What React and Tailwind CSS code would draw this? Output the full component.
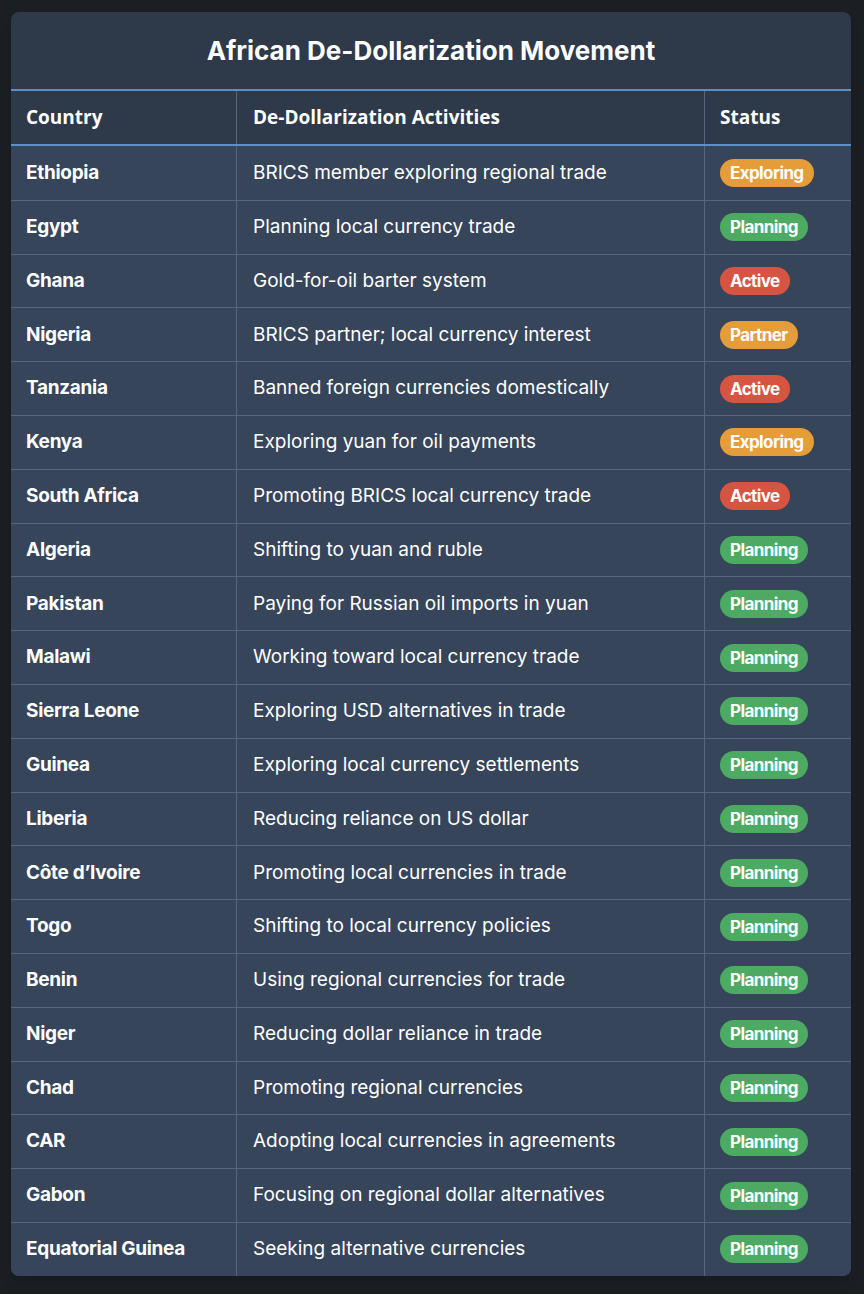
const rows = [
  ['Ethiopia', 'BRICS member exploring regional trade', 'Exploring'],
  ['Egypt', 'Planning local currency trade', 'Planning'],
  ['Ghana', 'Gold-for-oil barter system', 'Active'],
  ['Nigeria', 'BRICS partner; local currency interest', 'Partner'],
  ['Tanzania', 'Banned foreign currencies domestically', 'Active'],
  ['Kenya', 'Exploring yuan for oil payments', 'Exploring'],
  ['South Africa', 'Promoting BRICS local currency trade', 'Active'],
  ['Algeria', 'Shifting to yuan and ruble', 'Planning'],
  ['Pakistan', 'Paying for Russian oil imports in yuan', 'Planning'],
  ['Malawi', 'Working toward local currency trade', 'Planning'],
  ['Sierra Leone', 'Exploring USD alternatives in trade', 'Planning'],
  ['Guinea', 'Exploring local currency settlements', 'Planning'],
  ['Liberia', 'Reducing reliance on US dollar', 'Planning'],
  ['Côte d’Ivoire', 'Promoting local currencies in trade', 'Planning'],
  ['Togo', 'Shifting to local currency policies', 'Planning'],
  ['Benin', 'Using regional currencies for trade', 'Planning'],
  ['Niger', 'Reducing dollar reliance in trade', 'Planning'],
  ['Chad', 'Promoting regional currencies', 'Planning'],
  ['CAR', 'Adopting local currencies in agreements', 'Planning'],
  ['Gabon', 'Focusing on regional dollar alternatives', 'Planning'],
  ['Equatorial Guinea', 'Seeking alternative currencies', 'Planning'],
]

const badgeColors = {
  Exploring: 'bg-[#e59d3a]',
  Partner: 'bg-[#e59d3a]',
  Planning: 'bg-[#4caa62]',
  Active: 'bg-[#d65442]',
}

const StatusBadge = ({ status }) => (
  <span
    className={`inline-block rounded-full px-[10px] h-[28px] leading-[28px] text-[17px] font-bold tracking-[-0.6px] text-white ${badgeColors[status]}`}
  >
    {status}
  </span>
)

export default function App() {
  return (
    <div className="min-h-[1294px] bg-[#1b1e23] pt-[12px] pl-[11px] font-['Inter',sans-serif]">
      <div className="w-[840px] overflow-hidden rounded-lg bg-[#2e3949] shadow-lg">
        <h1 className="h-[77px] flex items-center justify-center text-[26px] font-bold text-white">
          African De-Dollarization Movement
        </h1>

        <div className="grid grid-cols-[226px_468px_1fr] h-[57px] border-y-2 border-[#5b8fc9] bg-[#2e3949] font-['Open_Sans',sans-serif] text-[19px] font-bold text-white">
          <div className="flex items-center px-[15px] border-r border-[#56667c]">Country</div>
          <div className="flex items-center px-[16px] border-r border-[#56667c]">De-Dollarization Activities</div>
          <div className="flex items-center px-[15px]">Status</div>
        </div>

        <div className="bg-[#364559]">
          {rows.map(([country, activity, status], i) => (
            <div
              key={country}
              className={`grid grid-cols-[226px_468px_1fr] h-[53.8px] text-[19px] text-white ${i > 0 ? 'border-t border-[#56667c]' : ''}`}
            >
              <div className="flex items-center px-[15px] font-bold tracking-[-0.3px] border-r border-[#56667c]">{country}</div>
              <div className="flex items-center px-[16px] border-r border-[#56667c]">{activity}</div>
              <div className="flex items-center px-[15px]">
                <StatusBadge status={status} />
              </div>
            </div>
          ))}
        </div>
      </div>
    </div>
  )
}
